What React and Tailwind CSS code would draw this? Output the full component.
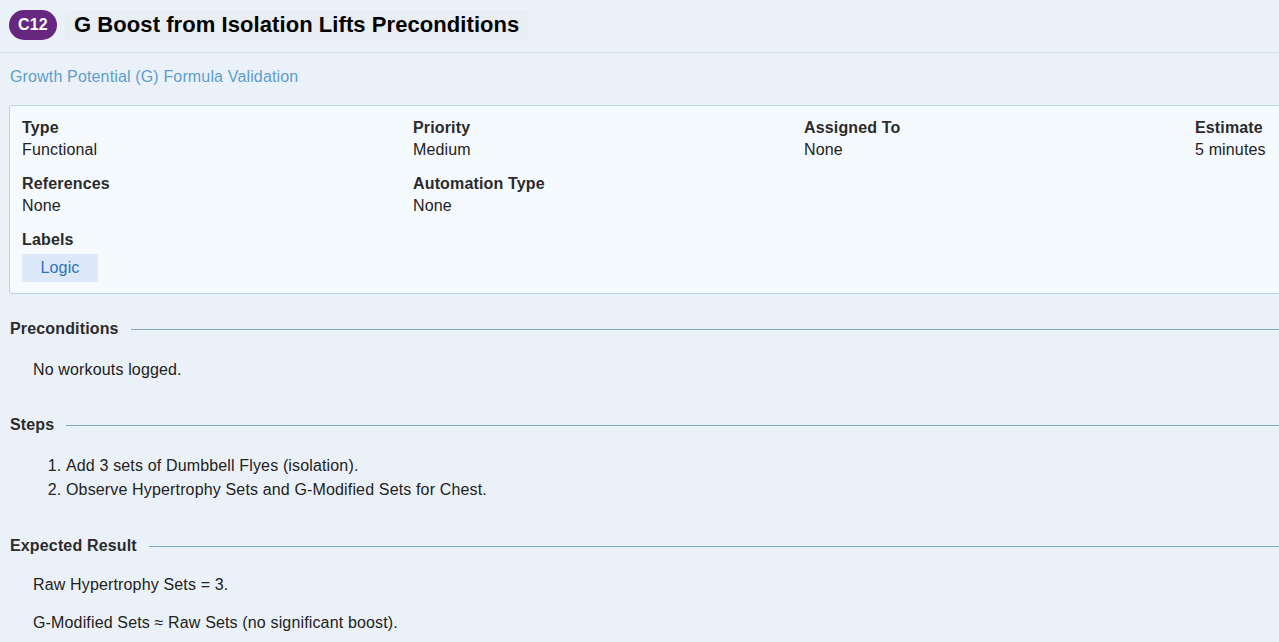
import React from 'react';

const meta = [
  { label: 'Type', value: 'Functional' },
  { label: 'Priority', value: 'Medium' },
  { label: 'Assigned To', value: 'None' },
  { label: 'Estimate', value: '5 minutes' },
  { label: 'References', value: 'None' },
  { label: 'Automation Type', value: 'None' },
];

function SectionTitle({ children }) {
  return (
    <div className="flex items-center gap-3">
      <h3 className="text-base leading-[22px] font-bold text-[#2b2b2b] whitespace-nowrap">{children}</h3>
      <div className="flex-1 h-px bg-[#7ea8cc]" />
    </div>
  );
}

export default function App() {
  return (
    <div className="w-full min-h-screen overflow-hidden bg-[#ebf1f8] font-['Liberation_Sans',Arial,sans-serif] tracking-[0.15px] text-[#222]">
      {/* Header */}
      <div className="flex items-center gap-2 pl-[9px] pt-[10px] pb-[12px] border-b border-[#d0e1ef]">
        <span className="h-[30px] w-[48px] rounded-full bg-[#67267f] text-white text-base font-bold flex items-center justify-center">
          C12
        </span>
        <h1 className="bg-[#e9eef3] px-[9px] text-[22px] leading-[30px] font-bold tracking-[0.07px] text-black">
          G Boost from Isolation Lifts Preconditions
        </h1>
      </div>

      <div className="w-[1600px] px-[10px]">
        <p className="mt-[13px] text-base leading-[22px] text-[#5e9dcf]">Growth Potential (G) Formula Validation</p>

        {/* Details card */}
        <div className="mt-[17px] -ml-px w-[1590px] bg-[#f5faff] border border-[#bcd3e8] rounded-[3px] px-3 pt-[11px] pb-[11px]">
          <div className="grid grid-cols-[repeat(4,391px)] gap-y-3">
            {meta.map((m) => (
              <div key={m.label} className="leading-[22px]">
                <div className="font-bold text-[#2b2b2b]">{m.label}</div>
                <div className="text-[#222]">{m.value}</div>
              </div>
            ))}
            <div className="col-span-4">
              <div className="font-bold leading-[22px] text-[#2b2b2b]">Labels</div>
              <span className="mt-[3px] inline-flex h-[28px] w-[76px] items-center justify-center rounded-[3px] bg-[#dde9f9] text-[#2f70c4]">
                Logic
              </span>
            </div>
          </div>
        </div>

        {/* Preconditions */}
        <div className="mt-[24px]">
          <SectionTitle>Preconditions</SectionTitle>
          <p className="mt-[19px] pl-[23px] leading-[22px]">No workouts logged.</p>
        </div>

        {/* Steps */}
        <div className="mt-[33px]">
          <SectionTitle>Steps</SectionTitle>
          <ol className="mt-[19px] list-decimal pl-[56px] leading-[22px] space-y-[2px]">
            <li>Add 3 sets of Dumbbell Flyes (isolation).</li>
            <li>Observe Hypertrophy Sets and G-Modified Sets for Chest.</li>
          </ol>
        </div>

        {/* Expected Result */}
        <div className="mt-[34px]">
          <SectionTitle>Expected Result</SectionTitle>
          <div className="mt-[17px] pl-[23px] leading-[22px] space-y-4">
            <p>Raw Hypertrophy Sets = 3.</p>
            <p>G-Modified Sets ≈ Raw Sets (no significant boost).</p>
          </div>
        </div>
      </div>
    </div>
  );
}
